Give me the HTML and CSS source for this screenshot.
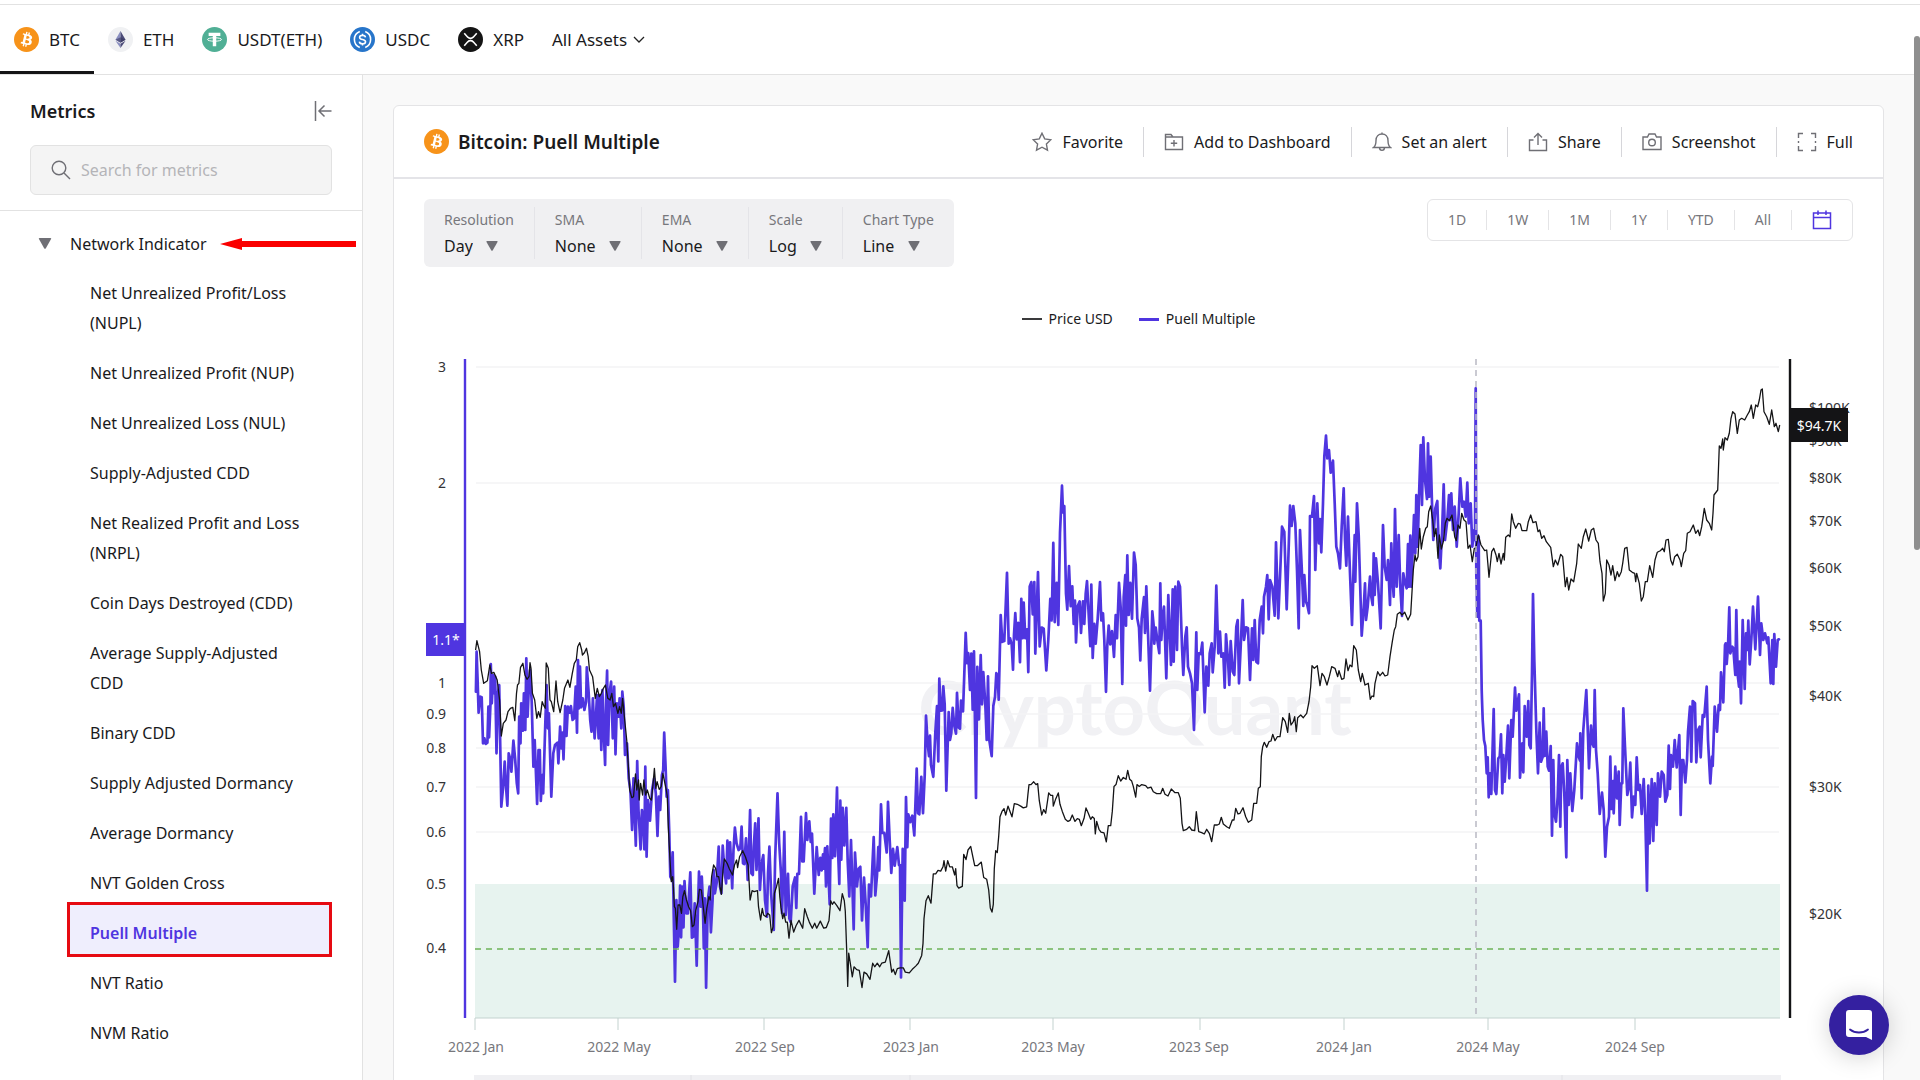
FILE: index.html
```html
<!DOCTYPE html>
<html lang="en">
<head>
<meta charset="utf-8">
<meta name="viewport" content="width=device-width, initial-scale=1">
<title>Bitcoin: Puell Multiple</title>
<link rel="stylesheet" href="styles.css">
</head>
<body>
<svg class="sprite" aria-hidden="true">
  <symbol id="coin-btc" viewBox="0 0 32 32">
    <circle cx="16" cy="16" r="16" fill="#f7931a"/>
    <path fill="#fff" d="M23.2 14c.3-2.1-1.3-3.2-3.4-4l.7-2.8-1.7-.4-.7 2.7-1.4-.3.7-2.8-1.7-.4-.7 2.8-1.1-.3-2.3-.6-.5 1.8s1.3.3 1.2.3c.7.2.8.6.8 1l-.8 3.2.2.1-.2-.1-1.1 4.5c-.1.2-.3.5-.8.4l-1.2-.3-.9 2 3.4.8-.7 2.8 1.7.4.7-2.8 1.4.4-.7 2.7 1.7.4.7-2.8c2.9.6 5.1.3 6-2.3.7-2.1 0-3.3-1.5-4.1 1.1-.2 1.9-1 2.2-2.5zm-3.9 5.4c-.5 2.1-4.1 1-5.2.7l.9-3.8c1.2.3 4.9.9 4.300 3.100zm.5-5.500c-.5 1.900-3.400.9-4.400.7l.9-3.400c1 .2 4 .7 3.500 2.700z"/>
  </symbol>
  <symbol id="coin-eth" viewBox="0 0 32 32">
    <circle cx="16" cy="16" r="16" fill="#f0f1f3"/>
    <path fill="#8a8fc0" d="M16 5 9.500 16.200 16 20z"/><path fill="#4b4b78" d="M16 5l6.500 11.200L16 20z"/>
    <path fill="#8a8fc0" d="M16 21.300 9.500 17.600 16 27z"/><path fill="#4b4b78" d="M16 21.300l6.500-3.700L16 27z"/>
    <path fill="#35355f" d="M16 13.200l-6.500 3L16 20l6.500-3.800z" opacity=".6"/>
  </symbol>
  <symbol id="coin-usdt" viewBox="0 0 32 32">
    <circle cx="16" cy="16" r="16" fill="#50af95"/>
    <path fill="#fff" d="M8.500 7.500h15v4h-5.300v13h-4.400v-13H8.500z"/>
    <ellipse cx="16" cy="16" rx="9" ry="2.200" fill="none" stroke="#fff" stroke-width="1.200"/>
  </symbol>
  <symbol id="coin-usdc" viewBox="0 0 32 32">
    <circle cx="16" cy="16" r="16" fill="#2775ca"/>
    <g fill="none" stroke="#fff" stroke-width="2">
      <path d="M12.500 5.800a11 11 0 0 0 0 20.400M19.500 5.800a11 11 0 0 1 0 20.400"/>
      <path d="M19.800 13.200c-.2-1.700-1.600-2.500-3.800-2.500s-3.700 1-3.700 2.600c0 3.700 7.600 1.800 7.600 5.500 0 1.700-1.600 2.700-3.900 2.700-2.400 0-3.900-1-4-2.800M16 8.500v2.200M16 21.500v2.200"/>
    </g>
  </symbol>
  <symbol id="coin-xrp" viewBox="0 0 32 32">
    <circle cx="16" cy="16" r="16" fill="#141414"/>
    <g fill="none" stroke="#fff" stroke-width="2">
      <path d="M8 8l4.500 5c2 2.100 5 2.100 7 0L24 8M8 24l4.500-5c2-2.100 5-2.100 7 0l4.500 5"/>
    </g>
  </symbol>
  <symbol id="tri" viewBox="0 0 12 10"><path d="M1 0h10q1 0 .5 1L6.800 9.300q-.8 1-1.600 0L.5 1Q0 0 1 0z" fill="#6f6f75"/></symbol>
</svg>

<div class="app">
  <header class="assets">
    <nav class="asset-tabs" aria-label="Assets">
      <a class="asset active" href="#btc"><svg class="coin"><use href="#coin-btc"/></svg>BTC</a>
      <a class="asset" href="#eth"><svg class="coin"><use href="#coin-eth"/></svg>ETH</a>
      <a class="asset" href="#usdt"><svg class="coin"><use href="#coin-usdt"/></svg>USDT(ETH)</a>
      <a class="asset" href="#usdc"><svg class="coin"><use href="#coin-usdc"/></svg>USDC</a>
      <a class="asset" href="#xrp"><svg class="coin"><use href="#coin-xrp"/></svg>XRP</a>
      <button class="asset all-assets" type="button">All Assets
        <svg class="chevron" viewBox="0 0 12 8" fill="none" stroke="#222" stroke-width="1.300"><path d="M1 1l5 5 5-5"/></svg>
      </button>
    </nav>
  </header>

  <div class="body">
    <aside class="sidebar">
      <div class="sidebar-head">
        <div class="sidebar-title">
          <h2>Metrics</h2>
          <button class="icon-button" type="button" aria-label="Collapse metrics">
            <svg viewBox="0 0 18 22" fill="none" stroke="#6f6f75" stroke-width="1.500"><path d="M1.500 1v20M17.500 11H5M10.500 5.500 5 11l5.500 5.500"/></svg>
          </button>
        </div>
        <label class="search">
          <svg viewBox="0 0 20 20" fill="none" stroke="#6f6f75" stroke-width="1.400"><circle cx="8" cy="8" r="6.800"/><path d="M13 13l6 6"/></svg>
          <input type="search" placeholder="Search for metrics" aria-label="Search for metrics">
        </label>
      </div>
      <div class="group">
        <button class="group-head" type="button" aria-expanded="true">
          <svg class="group-tri"><use href="#tri"/></svg>Network Indicator
          <svg class="arrow-mark" viewBox="0 0 136 12" aria-hidden="true"><path fill="#fa0000" d="M0 6 22 0v3h114v6H22v3z"/></svg>
        </button>
        <ul class="metrics">
          <li><a href="#nupl">Net Unrealized Profit/Loss (NUPL)</a></li>
          <li><a href="#nup">Net Unrealized Profit (NUP)</a></li>
          <li><a href="#nul">Net Unrealized Loss (NUL)</a></li>
          <li><a href="#sacdd">Supply-Adjusted CDD</a></li>
          <li><a href="#nrpl">Net Realized Profit and Loss (NRPL)</a></li>
          <li><a href="#cdd">Coin Days Destroyed (CDD)</a></li>
          <li><a href="#asacdd">Average Supply-Adjusted CDD</a></li>
          <li><a href="#bcdd">Binary CDD</a></li>
          <li><a href="#sad">Supply Adjusted Dormancy</a></li>
          <li><a href="#ad">Average Dormancy</a></li>
          <li><a href="#nvtgc">NVT Golden Cross</a></li>
          <li><a class="current" href="#puell">Puell Multiple</a></li>
          <li><a href="#nvt">NVT Ratio</a></li>
          <li><a href="#nvm">NVM Ratio</a></li>
        </ul>
      </div>
    </aside>

    <main class="main">
      <section class="card">
        <div class="card-head">
          <h1><svg class="coin"><use href="#coin-btc"/></svg>Bitcoin: Puell Multiple</h1>
          <div class="actions">
            <button type="button"><svg viewBox="0 0 20 20"><path d="M10 1.200l2.700 5.700 6.200.8-4.500 4.300 1.100 6.200L10 15.200l-5.500 3 1.100-6.200L1.100 7.700l6.200-.8z"/></svg>Favorite</button>
            <button type="button"><svg viewBox="0 0 20 20"><path d="M1.500 17.500v-15h5.500l2 2.500h9.500v12.500zM1.500 5H9M10 8v6.500M6.800 11.200h6.400"/></svg>Add to Dashboard</button>
            <button type="button"><svg viewBox="0 0 20 20"><path d="M1.500 15.500h17c-2-1.500-2.500-3-2.500-7C16 4.500 13.500 2 10 2S4 4.500 4 8.500c0 4-.5 5.500-2.500 7zM10 2V.5M7.500 15.500c0 3.800 5 3.800 5 0"/></svg>Set an alert</button>
            <button type="button"><svg viewBox="0 0 20 20"><path d="M5.500 8h-4v10.500h17V8h-4M10 13V1.500M6 5.500l4-4 4 4"/></svg>Share</button>
            <button type="button"><svg viewBox="0 0 20 20"><path d="M1 5h4.500L7 2h6l1.500 3H19v12.500H1z"/><circle cx="10" cy="10.500" r="3.300"/></svg>Screenshot</button>
            <button type="button"><svg viewBox="0 0 20 20"><path d="M6 1.500H1.500V6M14 1.500h4.500V6M6 18.500H1.500V14M14 18.500h4.500V14M1.500 9v2M18.500 9v2"/></svg>Full</button>
          </div>
        </div>

        <div class="card-body">
          <div class="toolbar">
            <div class="options">
              <label>Resolution<span class="pick"><select><option>Day</option></select><svg><use href="#tri"/></svg></span></label>
              <label>SMA<span class="pick"><select><option>None</option></select><svg><use href="#tri"/></svg></span></label>
              <label>EMA<span class="pick"><select><option>None</option></select><svg><use href="#tri"/></svg></span></label>
              <label>Scale<span class="pick"><select><option>Log</option></select><svg><use href="#tri"/></svg></span></label>
              <label>Chart Type<span class="pick"><select><option>Line</option></select><svg><use href="#tri"/></svg></span></label>
            </div>
            <div class="ranges">
              <button type="button">1D</button>
              <button type="button">1W</button>
              <button type="button">1M</button>
              <button type="button">1Y</button>
              <button type="button">YTD</button>
              <button type="button">All</button>
              <button type="button" aria-label="Pick dates"><svg viewBox="0 0 20 20" fill="none" stroke="#4f35e0" stroke-width="1.500"><path d="M1.500 3h17v15.500h-17zM1.500 7.500h17M6 .5V5M14 .5V5"/></svg></button>
            </div>
          </div>

          <div class="legend">
            <span class="key key-price">Price USD</span>
            <span class="key key-puell">Puell Multiple</span>
          </div>

          <svg class="chart" viewBox="0 0 1429 760" role="img" aria-label="Puell Multiple and price">
            <text class="watermark" x="711" y="385">CryptoQuant</text>
            <rect class="zone" x="51" y="534" width="1305" height="134"/>
            <path class="grid" d="M52 17h1303M52 133h1303M52 333h1303M52 364h1303M52 398h1303M52 437h1303M52 482h1303"/>
            <path class="axis-x" d="M51 668h1305M51 668v12M194 668v12M340 668v12M486 668v12M629 668v12M776 668v12M920 668v12M1064 668v12M1211 668v12"/>
            <polyline class="line-puell" id="line-puell"/>
            <polyline class="line-price" id="line-price"/>
            <path class="threshold" d="M51 599h1305"/>
            <path class="halving" d="M1052 9v659"/>
            <path class="axis-left" d="M41 9v659"/>
            <path class="axis-right" d="M1366 9v659"/>
            <g class="ticks-left">
              <text x="22" y="22">3</text><text x="22" y="138">2</text><text x="22" y="338">1</text>
              <text x="22" y="369">0.9</text><text x="22" y="403">0.8</text><text x="22" y="442">0.7</text>
              <text x="22" y="487">0.6</text><text x="22" y="539">0.5</text><text x="22" y="603">0.4</text>
            </g>
            <g class="ticks-right">
              <text x="1385" y="63">$100K</text><text x="1385" y="96">$90K</text><text x="1385" y="133">$80K</text>
              <text x="1385" y="176">$70K</text><text x="1385" y="223">$60K</text><text x="1385" y="281">$50K</text>
              <text x="1385" y="351">$40K</text><text x="1385" y="442">$30K</text><text x="1385" y="569">$20K</text>
            </g>
            <g class="ticks-x">
              <text x="52" y="702">2022 Jan</text><text x="195" y="702">2022 May</text><text x="341" y="702">2022 Sep</text>
              <text x="487" y="702">2023 Jan</text><text x="629" y="702">2023 May</text><text x="775" y="702">2023 Sep</text>
              <text x="920" y="702">2024 Jan</text><text x="1064" y="702">2024 May</text><text x="1211" y="702">2024 Sep</text>
            </g>
            <rect class="tag-puell" x="2" y="273" width="40" height="33"/>
            <text class="tag-text" x="22" y="295">1.1*</text>
            <rect class="tag-price" x="1366" y="58" width="58" height="34"/>
            <text class="tag-text" x="1395" y="81">$94.7K</text>
            <rect class="navigator" x="50" y="725" width="1307" height="34"/>
            <path class="navigator-grid" d="M267 725v34M486 725v34M1138 725v34"/>
          </svg>
        </div>
      </section>
    </main>
  </div>
</div>

<div class="scroll-thumb" aria-hidden="true"></div>
<button class="chat" type="button" aria-label="Open chat">
  <svg viewBox="0 0 28 32"><path fill="#fff" d="M4 1h20q3 0 3 3v27l-6-3H4q-3 0-3-3V4q0-3 3-3z"/><path fill="none" stroke="#3420a0" stroke-width="1.800" stroke-linecap="round" d="M5 20.500c5 4 13 4 18 0"/></svg>
</button>
<script src="chart.js"></script>
</body>
</html>
```
FILE: styles.css
```css
* { box-sizing: border-box; }

body {
  margin: 0;
  font-family: "Noto Sans", "Open Sans", sans-serif;
  font-size: 16px;
  color: #1a1a1c;
  background: #fff;
}

button, input, select {
  font: inherit;
  color: inherit;
  background: none;
  border: 0;
  padding: 0;
  margin: 0;
}

button { cursor: pointer; }
a { color: inherit; text-decoration: none; }
h1, h2 { margin: 0; font-weight: 600; }

.sprite { position: absolute; width: 0; height: 0; }

.app {
  display: flex;
  flex-direction: column;
  height: 100vh;
  overflow: hidden;
}

.assets {
  margin-top: 4px;
  border-top: 1px solid #e2e2e2;
  border-bottom: 1px solid #e2e2e2;
}

.asset-tabs { display: flex; }

.asset {
  display: flex;
  align-items: center;
  gap: 10px;
  height: 69px;
  padding: 0 14px;
  font-size: 17px;
}

.asset.active { box-shadow: inset 0 -3px #141416; }
.all-assets { gap: 6px; }
.coin { width: 25px; height: 25px; flex: none; }
.chevron { width: 12px; height: 8px; }

.body { display: flex; flex: 1; min-height: 0; }

.sidebar {
  flex: 0 0 363px;
  border-right: 1px solid #e2e2e2;
  overflow: hidden;
}

.sidebar-head {
  padding: 21px 30px 15px;
  border-bottom: 1px solid #e2e2e2;
}

.sidebar-title {
  display: flex;
  justify-content: space-between;
  align-items: center;
  height: 30px;
  margin-bottom: 19px;
}

h2 { font-size: 18px; }
.icon-button svg { display: block; width: 18px; height: 22px; }

.search {
  display: flex;
  align-items: center;
  gap: 10px;
  height: 50px;
  padding: 0 20px;
  background: #f4f4f4;
  border: 1px solid #e2e2e2;
  border-radius: 6px;
}

.search svg { width: 20px; height: 20px; flex: none; }
.search input { flex: 1; min-width: 0; outline: 0; }
.search input::placeholder { color: #b4b4b8; opacity: 1; }

.group { padding-top: 8px; }

.group-head {
  display: flex;
  align-items: center;
  width: 100%;
  height: 49px;
  padding: 0 6px 0 38px;
}

.group-tri { width: 14px; height: 11px; margin-right: 18px; }
.arrow-mark { width: 136px; height: 12px; margin-left: auto; }

.metrics {
  list-style: none;
  margin: 0;
  padding: 0 33px 0 70px;
}

.metrics a {
  display: block;
  padding: 10px 20px;
  line-height: 30px;
}

.metrics .current {
  position: relative;
  z-index: 0;
  color: #4f35e0;
  font-weight: 600;
}

.metrics .current::before {
  content: "";
  position: absolute;
  inset: -6px -3px 1px;
  z-index: -1;
  background: #efeefd;
  border: 3px solid #e60a12;
}

.main {
  flex: 1;
  min-width: 0;
  padding: 30px 36px 0 30px;
  background: #f9f9f9;
}

.card {
  background: #fff;
  border: 1px solid #e4e4e6;
  border-radius: 6px;
}

.card-head {
  display: flex;
  justify-content: space-between;
  align-items: center;
  height: 73px;
  padding: 0 30px;
  border-bottom: 2px solid #e4e4e8;
}

h1 {
  display: flex;
  align-items: center;
  gap: 9px;
  font-size: 19px;
}

.actions { display: flex; align-items: center; }

.actions button {
  display: flex;
  align-items: center;
  gap: 10px;
  height: 30px;
  padding: 0 20px;
  border-left: 1px solid #d6d6da;
}

.actions button:first-child { border-left: 0; }
.actions button:last-child { padding-right: 0; }

.actions svg {
  width: 20px;
  height: 20px;
  fill: none;
  stroke: #6f6f75;
  stroke-width: 1.4;
}

.card-body { padding: 20px 30px 0; }

.toolbar {
  display: flex;
  justify-content: space-between;
  align-items: flex-start;
}

.options {
  display: flex;
  padding: 8px 0;
  background: #f0f0f2;
  border-radius: 6px;
}

.options label {
  display: flex;
  flex-direction: column;
  padding: 0 20px;
  font-size: 14px;
  line-height: 26px;
  color: #77777c;
  border-left: 1px solid #e4e4e8;
}

.options label:first-child { border-left: 0; }

.pick {
  display: flex;
  align-items: center;
  gap: 13px;
  font-size: 16px;
  color: #1a1a1c;
}

.pick select { appearance: none; line-height: 26px; }
.pick svg { width: 12px; height: 10px; }

.ranges {
  display: flex;
  align-items: center;
  height: 42px;
  border: 1px solid #e4e4e6;
  border-radius: 6px;
}

.ranges button {
  height: 20px;
  padding: 0 20px;
  font-size: 14px;
  line-height: 20px;
  color: #77777c;
  border-left: 1px solid #e4e4e6;
}

.ranges button:first-child { border-left: 0; }
.ranges svg { display: block; width: 20px; height: 20px; }

.legend {
  display: flex;
  justify-content: center;
  gap: 26px;
  margin: 42px 0 21px;
  font-size: 14px;
  line-height: 20px;
}

.key { display: flex; align-items: center; gap: 7px; }
.key::before { content: ""; width: 20px; height: 2px; background: #3a3a3c; }
.key-puell::before { background: #4f35e0; height: 3px; }

.chart { display: block; width: 100%; height: auto; }
.chart text { font-size: 14px; fill: #333336; }
.chart .watermark {
  font-family: Lato, sans-serif;
  font-size: 74px;
  font-weight: 700;
  fill: #f1f1f4;
  text-anchor: middle;
}
.zone { fill: #e7f3ef; }
.grid { stroke: #f3f3f5; stroke-width: 1.5; }
.axis-x { fill: none; stroke: #c3d2cf; stroke-width: 1; }
.line-puell { fill: none; stroke: #4f35e0; stroke-width: 2.7; stroke-linejoin: round; stroke-linecap: round; }
.line-price { fill: none; stroke: #141416; stroke-width: 1.3; stroke-linejoin: round; }
.threshold { stroke: #6fb45a; stroke-width: 1.6; stroke-dasharray: 6 5; }
.halving { stroke: #b9b9c4; stroke-width: 1.5; stroke-dasharray: 6 5; }
.axis-left { stroke: #4f35e0; stroke-width: 2.4; }
.axis-right { stroke: #141416; stroke-width: 2.4; }
.ticks-left { text-anchor: end; }
.ticks-x { text-anchor: middle; }
.chart .ticks-x text { fill: #77777c; }
.tag-puell { fill: #4f35e0; }
.tag-price { fill: #141416; }
.chart .tag-text { fill: #fff; text-anchor: middle; }
.navigator { fill: #f0f0f3; }
.navigator-grid { stroke: #e2e2e6; }

.scroll-thumb {
  position: fixed;
  top: 36px;
  right: 0;
  width: 6px;
  height: 514px;
  background: #8f8f8f;
  border-radius: 3px;
}

.chat {
  position: fixed;
  right: 31px;
  bottom: 25px;
  display: grid;
  place-items: center;
  width: 60px;
  height: 60px;
  background: #3420a0;
  border-radius: 50%;
  box-shadow: 0 2px 24px rgba(0, 0, 0, .18);
}

.chat svg { width: 28px; height: 32px; }
```
FILE: chart.js
```javascript
// Each run of samples has its own origin and units per pixel.
const puell = [
  { ox: -14, oy: 350, sx: 2.958, sy: 3, d: "195,-25 197,-145 200,-60 203,38 208,-10 212,-8 216,130 220,115 224,132 229,128 232,20 234,112 238,10 239,-108 242,10 246,-75 249,-20 252,-70 256,160 260,-20 264,-45 270,320 275,265 280,185 284,260 288,317 292,160 296,175 300,215 306,122 311,175 316,250 320,280 323,50 327,130 329,10 334,92 337,-20 341,90 344,-125 348,50 352,-50 355,-90 360,5 365,200 369,120 376,312 380,150 384,150 387,303 391,225 394,280 400,80 404,-45 408,85 411,40 418,290 424,160 429,135 436,128 439,190 444,80 448,145 451,98 454,178 459,18 463,108 467,20 472,38 476,18 481,60 485,55 490,-40 494,98 497,-120 500,25 503,-100 506,22 511,-5 516,30 521,5 523,-98 528,-30 533,60 537,95 541,-5 546,115 550,55 553,-15 558,115 561,-15 566,150 569,-30 573,90 577,195 580,0 583,-88 586,135 590,-20 595,-55 600,115 604,-40 608,163 612,10 617,50 620,-5 625,85 628,-25 632,20 636,165 642,130 647,235 652,270 657,390 661,235 668,437 672,183 676,330 682,448 686,330 690,370 693,448 696,200 700,470 704,300 710,362 716,270 722,235 727,280 732,408 736,290 740,330 745,225 749,210 752,98 756,200 759,290 763,270 767,400 770,530 775,540 777,457 780,640 784,845 788,600 792,740 796,680 799,557 802,712 805,560 809,682 812,543 817,640 822,640 829,517 834,713 838,710 842,610 848,797 852,620 855,515 860,620 863,530 866,600 869,745 872,595 876,863 881,600 886,560 890,697 895,600 898,510 902,580 907,550 913,440 917,560 921,580 925,437 930,510 935,550 939,422 943,535 947,427 953,565 957,450 961,383 966,430 972,450 977,445 981,380 985,490 989,492 994,415 999,540 1002,470 1006,330 1010,520 1014,525 1017,440 1021,370 1025,510 1031,355 1035,570 1040,490 1045,465 1050,600 1056,650 1059,520 1063,440 1068,580 1076,690 1080,480 1087,280 1092,430" },
  { ox: 356, oy: 90, sx: 3, sy: 2.8, d: "3,1215 6,1325 10,1215 13,1097 17,1330 24,1215 28,1340 32,1350 38,1250 45,1225 49,1310 52,1215 57,1215 63,1055 67,1180 71,1180 78,1045 82,1120 88,1068 92,1125 96,1102 103,1270 110,1140 116,1218 121,1170 125,1205 129,1160 131,1200 135,1143 138,1250 142,1138 149,1300 153,1060 157,1170 160,1048 165,1165 171,973 174,1145 178,1243 181,1010 184,1175 188,1030 193,1135 199,1030 203,1180 208,1278 213,1120 221,1370 225,1155 231,1250 236,1200 241,1195 246,1345 252,1225 257,1300 263,1420 267,1245 273,1278 281,1112 286,1275 291,1220 295,1140 298,1205 303,1020 307,1100 313,1100 320,1155 324,1013 329,1120 334,1212 339,1145 344,1192 352,1140 357,1190 360,1190 363,1505 368,1145 374,1290 378,1000 382,1140 385,1048 391,1070 397,1052 403,1107 410,920 414,1045 418,1048 424,943 429,1045 434,940 438,772 443,850 447,885 450,828 453,910 460,943 466,820 471,745 475,900 478,668 482,758 487,757 490,690 494,740 499,982 506,762 510,840 514,820 518,750 523,800 528,822 531,708 536,805 540,808 543,730 549,760 552,680 557,540 561,625 565,597 570,700 574,598 578,755 582,592 588,1002 592,635 597,782 602,602 606,740 610,650 616,740 620,840 624,662 628,840 635,885 640,745 645,720 649,653 653,660 656,727 662,490 667,565 673,563 681,372 686,570 690,555 695,573 699,643 702,545 706,485 710,558 715,512 720,622 724,445 728,555 731,455 736,555 741,530 745,650 749,410 754,398 758,488 763,398 766,598 774,370 779,578 785,525 791,528 799,645 805,560 811,445 815,505 820,288 824,510 830,400 835,518 840,260 846,128 849,203 853,185 858,430 862,475 867,353 872,465 877,410 881,515 885,450 888,567 893,465 899,452 903,540 909,452 913,515 917,430 921,395 926,490 931,577 934,405 938,610 943,515 947,570 953,500 960,398 964,505 969,485 973,560 978,705 982,575 986,520 991,572 996,535 1002,607 1007,490 1011,555 1017,400 1022,470 1027,683 1031,440 1036,378 1038,520 1042,323 1046,490 1051,400 1056,500 1062,315 1067,350 1072,500 1077,525 1081,617 1085,500 1092,440 1095,540 1099,410 1104,540 1110,702 1117,480 1121,520 1123,570 1127,525 1132,560 1138,597" },
  { ox: 736, oy: 70, sx: 3, sy: 3, d: "1,490 4,660 8,590 12,560 19,775 25,525 33,735 38,508 41,725 46,500 51,690 55,485 60,500 66,680 70,765 76,650 80,622 84,740 90,760 96,790 102,930 109,637 112,810 116,700 122,702 127,668 134,877 139,740 145,797 149,700 155,670 158,757 164,680 169,497 175,700 180,635 184,710 190,700 194,803 198,643 204,720 208,795 212,663 218,755 223,765 229,620 233,600 237,790 242,680 248,540 252,660 258,622 264,625 270,780 276,625 280,720 284,600 289,725 294,730 299,600 305,560 309,640 312,530 318,500 322,465 326,598 330,480 337,500 344,587 348,367 355,595 361,450 366,320 373,335 380,568 385,420 390,257 395,318 400,258 406,310 411,450 416,625 420,330 425,440 430,558 433,465 438,545 442,555 447,580 450,288 456,290 462,228 466,450 472,250 477,370 480,297 484,397 489,250 493,110 498,47 502,115 507,90 512,158 519,122 524,250 529,380 534,400 540,445 545,320 551,205 555,360 559,437 564,290 570,460 576,615 581,430 584,345 586,485 591,250 596,345 600,480 605,647 611,565 615,490 618,600 623,560 630,470 634,530 638,555 641,400 644,525 648,415 654,490 662,625 669,315 674,440 680,480 684,420 690,555 694,370 698,485 701,530 705,267 710,500 716,345 721,500 726,588 730,460 734,485 740,505 744,372 747,500 751,347 754,500 758,390 762,285 766,400 769,225 773,380 777,230 782,75 786,255 790,52 795,180 801,237 804,70 808,230 812,110 816,250 820,360 826,265 832,243 836,380 841,445 846,340 851,193 855,360 862,300 867,225 871,300 874,220 879,330 884,260 890,380 896,280 901,175 907,260 912,245 917,290 922,188 926,310 932,250 937,380 943,330" },
  { ox: 1036, oy: -10, sx: 3, sy: 3, d: "45,600 47,145 49,700 52,830 56,590 58,842 62,842 65,1050" },
  { ox: 1036, oy: 290, sx: 3, sy: 3, d: "66,180 68,240 72,300 76,318 80,400 83,352 86,472 90,400 94,462 101,207 105,450 109,462 115,355 119,350 123,283 127,460 130,345 134,425 139,350 144,257 148,415 154,240 158,290 165,143 169,212 177,163 180,413 187,310 190,397 194,198 200,290 205,183 208,315 212,325 216,100 219,-138 223,60 229,270 234,400 239,248 243,365 248,350 251,205 254,348 259,275 263,380 267,392 272,318 276,587 280,360 283,520 288,545 293,470 297,345 301,560 304,380 308,370 313,460 319,652 322,360 326,495 331,400 337,513 343,450 351,310 356,350 360,362 361,280 365,475 370,270 379,150 384,290 387,385 393,257 397,310 401,320 404,150 408,330 413,400 419,522 426,458 431,510 436,650 441,560 447,530 451,350 454,507 459,423 461,520 466,380 471,475 476,395 479,555 484,430 487,430 490,205 495,320 502,465 507,440 511,368 516,532 521,470 526,495 530,352 535,450 540,435 545,522 551,417 556,530 561,752 565,437 569,610 575,417 580,603 584,430 590,555 594,400 600,470 605,395 611,405 616,485 622,465 626,317 630,447 633,345 639,380 644,300 650,382 658,285 662,525 666,360 670,360 676,427 681,360 684,275 690,200 694,365 698,183 705,190 709,367 714,270 719,260 722,352 728,225 733,230 740,140 744,300 751,430 756,350 758,378 764,200 771,275 776,195 780,210 783,97 790,187 795,15 797,10 800,72 804,20 808,-98 811,40 817,20 820,25 826,105 829,-90 833,105 837,140 839,65 843,190 848,-60 854,147 858,-20 862,30 865,-58 869,73 874,0 879,-100 886,28 890,-50 894,-130 900,45 904,-50 910,0 915,-20 922,10 925,-8 932,130 937,0 940,132 943,-18 948,80 953,0 957,-2" }
];

const price = [
  { ox: -14, oy: 350, sx: 2.958, sy: 3, d: "194,-150 198,-178 206,-145 211,-90 218,-50 229,-58 236,-105 241,-80 248,-83 258,-60 265,0 270,108 276,70 284,60 290,35 297,25 304,22 310,62 315,-20 318,-45 322,-50 327,-98 334,-110 340,-75 346,-62 352,-70 355,-112 358,-95 362,-20 369,0 375,55 380,35 385,52 391,5 395,15 400,25 403,-111 409,-95 414,0 418,5 425,35 432,-57 437,5 444,38 452,0 457,-35 467,-60 473,-38 480,-80 486,-110 492,-120 496,-160 502,-172 508,-150 510,-135 516,-142 522,-155 527,-130 531,-90 540,-70 548,-5 554,-35 560,-10 566,-20 572,-35 578,-45 585,-5 592,0 597,-20 602,20 608,10 615,40 620,20 625,40 629,-5 635,60 641,120 646,200 650,270 656,293 661,290 667,222 671,270 676,240 678,300 682,250 688,285 692,240 697,285 702,270 709,295 714,300 719,250 723,205 727,265 731,245 737,268 743,260 748,220 754,250 758,270 761,290 764,380 769,480 773,545 777,530 779,560 782,620 785,625 789,688 793,615 798,615 803,640 807,590 812,572 818,600 824,620 830,632 835,680 840,675 845,632 852,605 856,568 862,570 868,625 873,670 878,625 884,590 888,600 892,530 898,495 904,505 908,530 913,530 917,560 921,583 926,510 930,477 938,490 944,505 954,525 960,495 966,480 969,503 975,470 984,452 992,470 1000,495 1003,545 1006,600 1012,572 1018,575 1028,572 1031,620 1037,660 1042,625 1046,645 1053,650 1058,640 1064,645 1069,698 1074,680 1078,580 1084,560 1090,535 1094,590" },
  { ox: 356, oy: 90, sx: 3, sy: 2.8, d: "3,1310 8,1340 12,1325 17,1350 22,1350 27,1395 33,1345 41,1378 48,1360 57,1345 68,1367 74,1312 82,1335 88,1350 97,1367 104,1353 110,1367 121,1347 131,1367 139,1365 147,1345 152,1290 157,1300 162,1293 170,1303 180,1318 187,1270 193,1290 196,1320 200,1430 203,1530 206,1437 211,1465 217,1503 222,1475 230,1483 238,1485 246,1533 252,1490 260,1495 270,1510 278,1465 284,1475 292,1465 299,1475 305,1465 316,1462 326,1430 335,1490 340,1482 346,1497 352,1480 360,1478 370,1478 376,1490 388,1492 397,1482 407,1473 415,1465 425,1443 429,1410 432,1340 438,1290 445,1276 453,1297 457,1250 460,1215 467,1215 474,1205 482,1207 489,1195 492,1178 497,1207 503,1178 509,1195 517,1195 524,1218 527,1200 531,1248 536,1255 547,1250 551,1160 558,1175 564,1148 572,1138 578,1165 584,1192 592,1192 600,1185 604,1182 611,1225 620,1230 626,1260 631,1310 636,1322 640,1300 643,1200 647,1150 652,1155 656,1110 660,1055 666,1040 672,1032 677,1050 684,1025 690,1040 696,1055 703,1018 712,1020 722,1025 730,1030 740,1027 744,990 747,965 753,965 761,957 768,965 773,962 778,1010 785,1050 791,1035 797,1045 802,1015 806,988 812,995 818,995 820,1025 827,1005 835,988 840,1020 847,1040 856,1062 864,1068 870,1065 877,1050 885,1068 892,1060 898,1062 904,1080 912,1060 918,1030 925,1045 932,1062 937,1055 943,1060 946,1103 950,1068 957,1090 963,1098 972,1100 979,1125 985,1080 992,1080 997,1040 1002,970 1008,965 1015,940 1022,955 1030,945 1038,950 1043,925 1049,950 1055,955 1060,970 1067,1000 1071,965 1078,970 1085,965 1097,968 1103,975 1113,972 1120,985 1130,990 1142,990" },
  { ox: 736, oy: 70, sx: 3, sy: 3, d: "8,1105 15,1123 24,1128 34,1107 45,1118 55,1118 61,1135 66,1210 70,1232 80,1228 88,1220 95,1230 104,1232 109,1175 116,1235 125,1238 133,1242 140,1228 148,1240 155,1265 163,1215 172,1215 178,1212 184,1192 190,1212 200,1220 208,1225 217,1200 222,1200 227,1165 234,1182 240,1180 249,1163 257,1190 265,1207 275,1200 281,1150 290,1150 295,1105 301,1100 304,1010 308,980 313,967 320,982 327,965 333,963 338,943 345,962 352,950 360,950 368,893 376,905 383,937 388,880 393,915 400,905 404,890 409,935 413,893 422,885 430,893 440,880 447,845 452,800 456,737 463,745 472,737 480,797 486,760 493,770 501,795 508,770 515,740 525,745 533,770 537,752 545,778 552,775 558,717 564,752 570,735 576,740 581,677 589,690 595,750 602,785 607,760 615,795 625,790 631,838 636,828 641,830 645,790 653,755 660,767 668,757 675,768 683,765 690,710 697,665 703,630 707,620 712,583 720,577 726,585 734,577 744,600 752,583 757,500 760,450 765,405 769,423 774,410 779,325 784,387 790,350 797,325 802,320 806,275 812,258 818,300 823,350 828,325 834,415 838,345 844,387 850,365 856,310 861,295 868,302 876,285 884,350 889,362 894,315 900,325 905,280 912,300 918,305 924,385 930,375 937,425 943,385" },
  { ox: 1036, oy: -10, sx: 3, sy: 3, d: "47,625 55,585 63,615 74,632 80,630 87,712 95,635 101,625 108,645 112,665 117,640 123,672 130,640 133,660 137,592 145,585 150,590 155,522 160,545 167,565 175,550 181,552 186,572 200,572 205,545 212,525 219,548 228,545 234,575 239,570 245,595 252,587 259,605 272,622 280,680 286,660 293,675 302,643 308,650 316,740 321,712 326,750 333,717 341,725 350,670 355,612 364,625 370,590 377,567 386,603 394,570 401,565 408,600 415,610 420,665 426,700 430,783 436,760 440,660 447,675 453,705 458,677 465,722 472,695 477,710 484,695 488,670 494,625 501,622 508,690 517,697 524,700 527,725 530,700 538,730 544,783 550,770 556,725 562,725 569,677 578,712 585,660 592,637 601,632 608,625 613,635 618,600 625,598 632,660 638,675 644,650 652,643 660,660 664,680 671,640 677,632 682,580 690,575 700,555 707,580 714,570 719,587 725,560 733,505 740,540 748,550 755,570 759,520 762,465 773,450 778,318 783,325 788,297 790,330 795,293 802,300 808,280 813,235 818,215 825,222 832,280 838,240 845,235 854,240 862,225 868,215 874,195 880,235 887,195 893,200 898,180 903,150 907,147 912,215 920,230 928,253 935,210 943,260 948,250 955,275 959,255" }
];

function toPoints(runs) {
  return runs.map(({ ox, oy, sx, sy, d }) =>
    d.split(" ").map((pair) => {
      const [x, y] = pair.split(",").map(Number);
      return (x / sx + ox).toFixed(1) + "," + (y / sy + oy).toFixed(1);
    }).join(" ")
  ).join(" ");
}

document.getElementById("line-puell").setAttribute("points", toPoints(puell));
document.getElementById("line-price").setAttribute("points", toPoints(price));
```
